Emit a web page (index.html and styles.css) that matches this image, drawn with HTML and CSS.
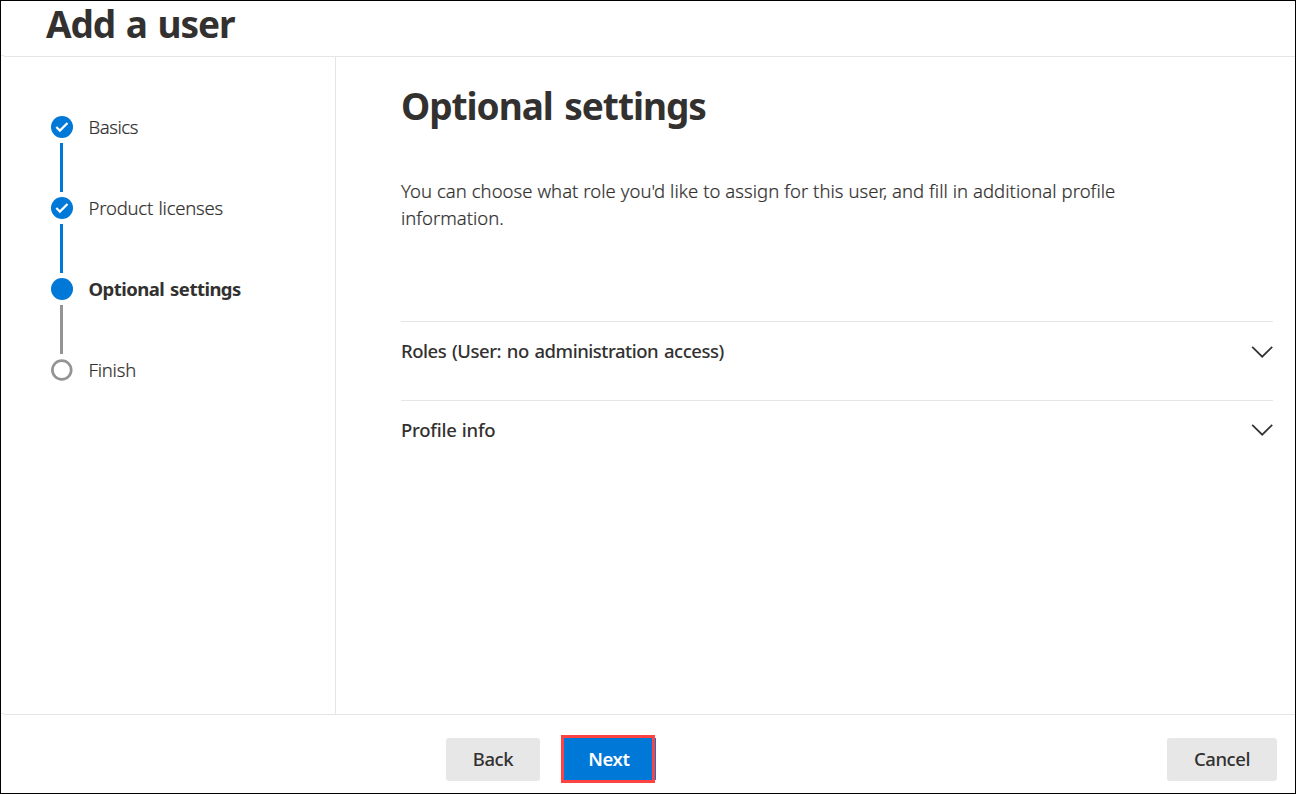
FILE: index.html
```html
<!DOCTYPE html>
<html lang="en">
<head>
<meta charset="utf-8">
<title>Add a user</title>
<link rel="stylesheet" href="styles.css">
</head>
<body>
<div class="wizard">
  <header class="header"><h1 class="title">Add a user</h1></header>
  <div class="body">
    <nav class="sidebar">
      <ol class="steps">
        <li class="step">
          <svg class="dot" viewBox="0 0 22 22"><circle cx="11" cy="11" r="11" fill="#0078d7"/><path d="M5.3 11l3.6 3.6 7.6-7.7" fill="none" stroke="#fff" stroke-width="2.2"/></svg>
          <span class="label label-basics">Basics</span>
        </li>
        <li class="line line-done"></li>
        <li class="step">
          <svg class="dot" viewBox="0 0 22 22"><circle cx="11" cy="11" r="11" fill="#0078d7"/><path d="M5.3 11l3.6 3.6 7.6-7.7" fill="none" stroke="#fff" stroke-width="2.2"/></svg>
          <span class="label label-product">Product licenses</span>
        </li>
        <li class="line line-done"></li>
        <li class="step step-current">
          <svg class="dot" viewBox="0 0 22 22"><circle cx="11" cy="11" r="11" fill="#0078d7"/></svg>
          <span class="label label-optional">Optional settings</span>
        </li>
        <li class="line"></li>
        <li class="step">
          <svg class="dot" viewBox="0 0 22 22"><circle cx="10.8" cy="11" r="9.4" fill="none" stroke="#949494" stroke-width="2.7"/></svg>
          <span class="label label-finish">Finish</span>
        </li>
      </ol>
    </nav>
    <main class="content">
      <h2 class="heading">Optional settings</h2>
      <p class="intro"><span class="intro-first">You can choose what role you'd like to assign for this user, and fill in additional profile</span><br>information.</p>
      <div class="section">
        <span class="section-roles">Roles (User: no administration access)</span>
        <svg class="chevron" viewBox="0 0 22 12"><path d="M1.2.9L11.2 10.7 21.2.9" fill="none" stroke="#323130" stroke-width="1.7"/></svg>
      </div>
      <div class="section">
        <span class="section-profile">Profile info</span>
        <svg class="chevron chevron-profile" viewBox="0 0 22 12"><path d="M1.2.9L11.2 10.7 21.2.9" fill="none" stroke="#323130" stroke-width="1.7"/></svg>
      </div>
    </main>
  </div>
  <footer class="footer">
    <button class="btn btn-back">Back</button>
    <button class="btn btn-next">Next</button>
    <button class="btn btn-cancel">Cancel</button>
  </footer>
</div>
</body>
</html>
```

FILE: styles.css
```css
* { box-sizing: border-box; }
body { margin: 0; background: #fff; color: #323130; font: 18.5px/27px "Noto Sans", "Open Sans", sans-serif; }
.wizard { display: flex; flex-direction: column; width: 1296px; height: 794px; border: 1px solid #000; }
.header, .footer { background: linear-gradient(#e5e5e5, #e5e5e5) no-repeat; }
.header { height: 56px; padding-left: 45px; background-position: 3px 55px; background-size: 1291px 1px; }
.title, .heading { margin: 0; font-size: 37px; line-height: 48px; font-weight: 700; white-space: nowrap; }
.title { line-height: 46px; letter-spacing: -1.06px; word-spacing: 2px; }
.body { display: flex; height: 657px; }
.body::before, .footer::before { content: ""; width: 3px; height: 1px; margin-right: -3px; margin-top: -2px; background: #e9e9e9; }
.sidebar { width: 335px; border-right: 1px solid #e5e5e5; padding: 59px 0 0 50px; }
.steps { list-style: none; margin: 0; padding: 0; }
.step { display: flex; align-items: center; gap: 15.5px; height: 22px; white-space: nowrap; font-weight: 300; -webkit-text-stroke: .2px #323130; }
.step-current { font-weight: 700; -webkit-text-stroke: 0; }
.label { padding-bottom: 2px; }
.label-basics { letter-spacing: -.45px; }
.label-product { letter-spacing: -.2px; word-spacing: .8px; }
.label-optional { letter-spacing: -.53px; word-spacing: 1.5px; }
.label-finish { letter-spacing: -.2px; }
.dot { width: 22px; height: 22px; flex: none; }
.line { width: 3px; height: 49px; margin: 5px 0 5px 9px; background: #949494; }
.line-done { background: #0078d7; }
.content { flex: 1; padding: 25px 22px 0 65px; }
.heading { letter-spacing: -1.05px; word-spacing: 3px; }
.intro { margin: 47px 0 90px; font-weight: 300; white-space: nowrap; -webkit-text-stroke: .2px #323130; }
.intro-first { letter-spacing: .05px; }
.section { display: flex; justify-content: space-between; align-items: flex-start; height: 79px; border-top: 1px solid #e5e5e5; padding-top: 15px; font-weight: 500; }
.section-roles { letter-spacing: -.47px; word-spacing: 1.4px; }
.section-profile { letter-spacing: -.25px; word-spacing: .8px; }
.chevron { width: 22px; height: 12px; margin-top: 9px; }
.chevron-profile { margin-top: 8px; }
.footer { display: flex; height: 79px; padding: 21px 18px 0 445px; align-items: flex-start; background-position: 3px 0; background-size: 1291px 1px; }
.footer::before { margin: -22px 442px 0 -445px; }
.btn { height: 43px; border: 0; border-radius: 3px; background: #e7e7e7; color: #323130; font: 500 18.5px/27px "Noto Sans", "Open Sans", sans-serif; letter-spacing: -.4px; padding: 0 0 2px; white-space: nowrap; }
.btn-back { width: 94px; margin-top: 3px; }
.btn-next { width: 94px; height: 48px; margin-left: 21px; border: 3px solid #ff4343; border-radius: 0; background: #0078d7; color: #fff; font-weight: 600; padding-left: 2px; box-shadow: 4px 0 0 -3px #0078d7; }
.btn-cancel { width: 110px; margin: 3px 0 0 auto; }
```
